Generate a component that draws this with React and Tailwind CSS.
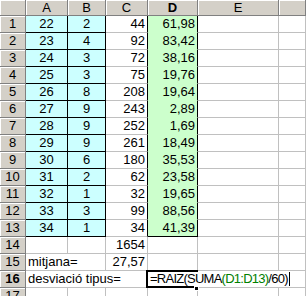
import React from 'react';

const data = [
  [22, 2, 44, '61,98'],
  [23, 4, 92, '83,42'],
  [24, 3, 72, '38,16'],
  [25, 3, 75, '19,76'],
  [26, 8, 208, '19,64'],
  [27, 9, 243, '2,89'],
  [28, 9, 252, '1,69'],
  [29, 9, 261, '18,49'],
  [30, 6, 180, '35,53'],
  [31, 2, 62, '23,58'],
  [32, 1, 32, '19,65'],
  [33, 3, 99, '88,56'],
  [34, 1, 34, '41,39'],
];

const hdr = 'bg-[#d4d0c8] border-r border-b border-[#808080] shadow-[inset_1px_1px_0_#fff] flex items-center justify-center';
const grid = 'border-r border-b border-[#c0c0c0]';

function Header({ children, bold }) {
  return <div className={`${hdr} ${bold ? 'font-bold' : ''}`}>{children}</div>;
}

function App() {
  return (
    <div className="w-[306px] h-[296px] overflow-hidden bg-white text-[13px] text-black" style={{ fontFamily: '"Liberation Sans", Arial, sans-serif' }}>
      <div className="grid grid-cols-[26px_42px_38px_42px_50px_81px_1fr] grid-rows-[16px_repeat(17,17px)] leading-[16px]">
        {/* column headers */}
        <Header />
        <Header>A</Header>
        <Header>B</Header>
        <Header>C</Header>
        <Header bold>D</Header>
        <Header>E</Header>
        <Header />

        {data.map(([a, b, c, d], i) => (
          <React.Fragment key={i}>
            <Header>{i + 1}</Header>
            <div className="bg-[#ccffff] border-r border-b border-black flex items-end justify-center">{a}</div>
            <div className="bg-[#ccffff] border-r border-b border-black flex items-end justify-center">{b}</div>
            <div className="border-r border-b border-r-black border-b-[#c0c0c0] flex items-end justify-end pr-[2px]">{c}</div>
            <div className={`bg-[#ccffcc] border-r border-b border-r-black ${i === 12 ? 'border-b-black' : 'border-b-[#ccffcc]'} flex items-end justify-end pr-[2px]`}>{d}</div>
            <div className={grid} />
            <div className={grid} />
          </React.Fragment>
        ))}

        {/* totals */}
        <Header>14</Header>
        <div className={grid} />
        <div className={grid} />
        <div className={`${grid} flex items-end justify-end pr-[2px]`}>1654</div>
        <div className={grid} />
        <div className={grid} />
        <div className={grid} />

        <Header>15</Header>
        <div className={`${grid} col-span-2 flex items-end pl-[2px]`}>mitjana=</div>
        <div className={`${grid} flex items-end justify-end pr-[2px]`}>27,57</div>
        <div className={grid} />
        <div className={grid} />
        <div className={grid} />

        <Header bold>16</Header>
        <div className={`${grid} col-span-3 flex items-end pl-[2px] whitespace-nowrap`}>desviació tipus=</div>
        <div className={`${grid} col-span-3 relative flex items-end pl-[2px] whitespace-nowrap tracking-[-0.75px]`}>
          <span>=RAIZ(SUMA</span>
          <span className="text-[#008000]">(D1:D13)</span>
          <span>/60)</span>
          <span className="inline-block w-px h-[14px] bg-black mb-[1px] ml-[1px]" />
          {/* active cell frame and fill handle */}
          <div className="absolute -left-[2px] -top-[1px] w-[52px] h-[18px] border-t-2 border-l-2 border-b-2 border-black pointer-events-none" />
          <div className="absolute left-[46px] top-[15px] w-[5px] h-[5px] bg-black border border-white" />
        </div>

        <Header>17</Header>
        <div className={grid} />
        <div className={grid} />
        <div className={grid} />
        <div className={grid} />
        <div className={grid} />
        <div className={grid} />
      </div>
    </div>
  );
}

export default App;
